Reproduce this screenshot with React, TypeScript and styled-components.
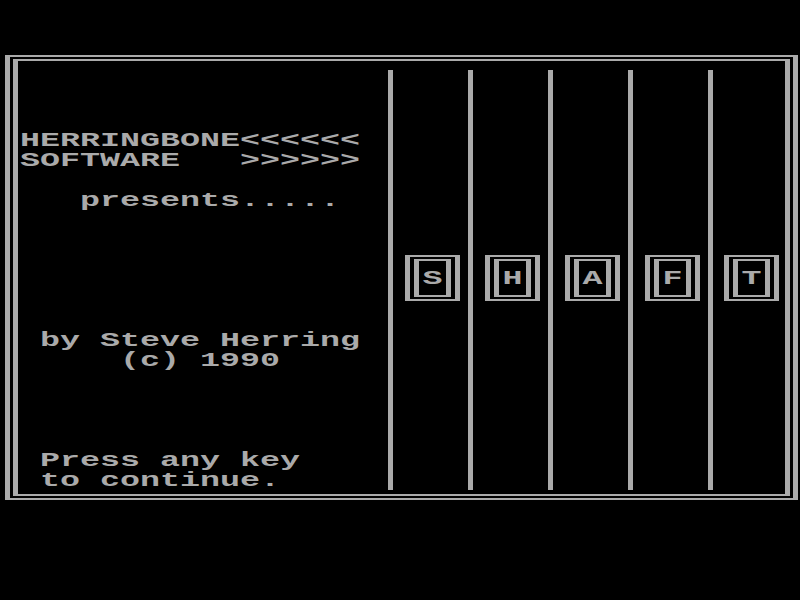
import styled, { createGlobalStyle } from "styled-components";

const GlobalStyle = createGlobalStyle`
  html, body {
    margin: 0;
    padding: 0;
    background: #000;
  }
  #root {
    width: 800px;
    height: 600px;
  }
`;

const GREY = "#aaaaaa";

const title = [
  "HERRINGBONE<<<<<<",
  "SOFTWARE   >>>>>>",
  "",
  "   presents.....",
  "",
  "",
  "",
  "",
  "",
  "",
  " by Steve Herring",
  "     (c) 1990",
  "",
  "",
  "",
  "",
  " Press any key",
  " to continue.",
];

const shaft = ["S", "H", "A", "F", "T"];

const App = () => {
  return (
    <Screen>
      <GlobalStyle />
      <Rim $width="793px" $height="445px" $pad="2px 3px">
        <Rim $pad="0" $fill>
          <Content>
            <TextPanel>
              {title.map((line, i) => (
                <TextLine key={i}>{line}</TextLine>
              ))}
            </TextPanel>
            {shaft.map((ch) => (
              <ShaftColumn key={ch}>
                <Bar />
                <Slot>
                  <Rim $pad="2px 4px">
                    <Rim $pad="0">
                      <Cell>
                        <Letter>{ch}</Letter>
                      </Cell>
                    </Rim>
                  </Rim>
                </Slot>
              </ShaftColumn>
            ))}
          </Content>
        </Rim>
      </Rim>
    </Screen>
  );
};

const Screen = styled.div`
  width: 800px;
  height: 600px;
  box-sizing: border-box;
  padding: 55px 0 0 5px;
  background: #000;
  color: ${GREY};
  font-family: "Liberation Mono", "DejaVu Sans Mono", monospace;
  font-weight: bold;
  overflow: hidden;
`;

// double-line box: thick sides, thin top and bottom
const Rim = styled.div<{
  $width?: string;
  $height?: string;
  $pad: string;
  $fill?: boolean;
}>`
  box-sizing: border-box;
  width: ${({ $width }) => $width || "auto"};
  height: ${({ $height }) => $height || "auto"};
  flex: ${({ $fill }) => ($fill ? "1" : "none")};
  padding: ${({ $pad }) => $pad};
  border-style: solid;
  border-color: ${GREY};
  border-width: 2px 5px;
  display: flex;
  flex-direction: column;
`;

const Content = styled.div`
  flex: 1;
  display: grid;
  grid-template-columns: 370px repeat(4, 80px) 1fr;
`;

const TextPanel = styled.div`
  padding: 70px 0 0 2px;
`;

const TextLine = styled.div`
  height: 20px;
  line-height: 20px;
  font-size: 20px;
  white-space: pre;
  transform: scaleX(1.6667);
  transform-origin: 0 0;
`;

const ShaftColumn = styled.div`
  display: flex;
`;

const Bar = styled.div`
  width: 5px;
  margin: 9px 0 4px;
  background: ${GREY};
`;

const Slot = styled.div`
  flex: 1;
  display: flex;
  align-items: center;
  justify-content: center;
  padding-left: 4px;
`;

const Cell = styled.div`
  width: 27px;
  height: 34px;
`;

const Letter = styled.div`
  margin-top: 2px;
  line-height: 32px;
  font-size: 20px;
  text-align: center;
  transform: scaleX(1.6667);
`;

export default App;
